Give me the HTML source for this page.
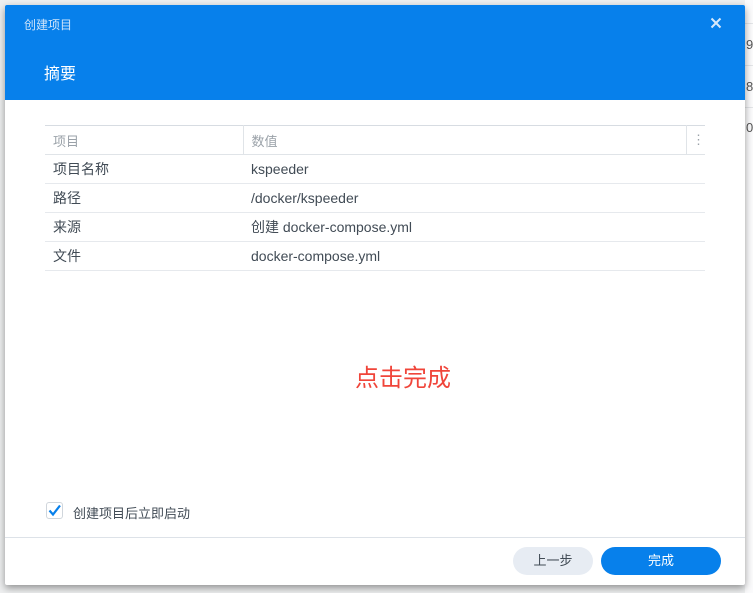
<!DOCTYPE html>
<html><head><meta charset="utf-8"><style>
*{margin:0;padding:0;box-sizing:border-box}
body{width:753px;height:593px;overflow:hidden;background:#eeeff0;position:relative;font-family:"Liberation Sans","Noto Sans CJK SC",sans-serif;font-size:13px;color:#414b55}
.bgright{position:absolute;left:745px;top:0;width:8px;height:593px;background:#fbfbfc}
.ln{position:absolute;left:700px;width:53px;height:1px;background:#e3e5e8}
.num{position:absolute;left:746px;font-size:13px;color:#555}
.dlg{position:absolute;left:5px;top:5px;width:740px;height:580px;background:#fff;box-shadow:0 3px 8px rgba(0,0,0,.4);border-radius:2px;overflow:hidden}
.hd{height:95px;background:#0780eb;position:relative}
.t1{position:absolute;left:19px;top:11px;color:#cfe4fa;font-size:12px}
.x{position:absolute;left:705px;top:12px}
.t2{position:absolute;left:39px;top:55px;color:#fff;font-size:16px}
table{position:absolute;left:40px;top:120px;width:660px;border-collapse:collapse}
td{height:29px;border-bottom:1px solid #e6e9ed;padding-left:8px;font-size:14px;color:#414b55}
tr.h td{color:#9aa1a8;font-size:13px;border-top:1px solid #d7dce2;border-bottom:1px solid #e0e4e8}
.red{position:absolute;left:350px;top:353px;color:#f0453a;font-size:24px}
.cb{position:absolute;left:41px;top:497px;width:17px;height:17px;border:1px solid #d0d6dc;border-radius:3px}
.cbl{position:absolute;left:68px;top:498px;font-size:13px;color:#414b55}
.ft{position:absolute;left:0;top:532px;width:740px;border-top:1px solid #dde2e8}
.b1{position:absolute;left:508px;top:542px;width:80px;height:28px;border-radius:14px;background:#e7ecf3;color:#414b55;text-align:center;line-height:28px}
.b2{position:absolute;left:596px;top:542px;width:120px;height:28px;border-radius:14px;background:#0780eb;color:#fff;text-align:center;line-height:28px}
</style></head><body>
<div class="bgright"></div>
<div class="ln" style="top:23px"></div><div class="ln" style="top:65px"></div><div class="ln" style="top:107px"></div>
<div class="num" style="top:37px">9</div><div class="num" style="top:79px">8</div><div class="num" style="top:120px">0</div>
<div class="dlg">
<div class="hd"><div class="t1">创建项目</div><svg class="x" width="12" height="12" viewBox="0 0 12 12"><path d="M1.5 1.5l9 9M10.5 1.5l-9 9" stroke="#d6e8fb" stroke-width="2"/></svg><div class="t2">摘要</div></div>
<table>
<tr class="h"><td style="width:198px;border-right:1px solid #e0e4e8">项目</td><td style="border-right:1px solid #e0e4e8">数值</td><td style="width:17px;padding-left:5px">⋮</td></tr>
<tr><td>项目名称</td><td colspan="2">kspeeder</td></tr>
<tr><td>路径</td><td colspan="2">/docker/kspeeder</td></tr>
<tr><td>来源</td><td colspan="2">创建 docker-compose.yml</td></tr>
<tr><td>文件</td><td colspan="2">docker-compose.yml</td></tr>
</table>
<div class="red">点击完成</div>
<div class="cb"><svg width="17" height="17" viewBox="0 0 17 17" style="position:absolute;left:-1px;top:-1px"><path d="M3.5 8.5l3.5 4 7-9" stroke="#0780eb" stroke-width="2.2" fill="none"/></svg></div>
<div class="cbl">创建项目后立即启动</div>
<div class="ft"></div>
<div class="b1">上一步</div>
<div class="b2">完成</div>
</div>
</body></html>
